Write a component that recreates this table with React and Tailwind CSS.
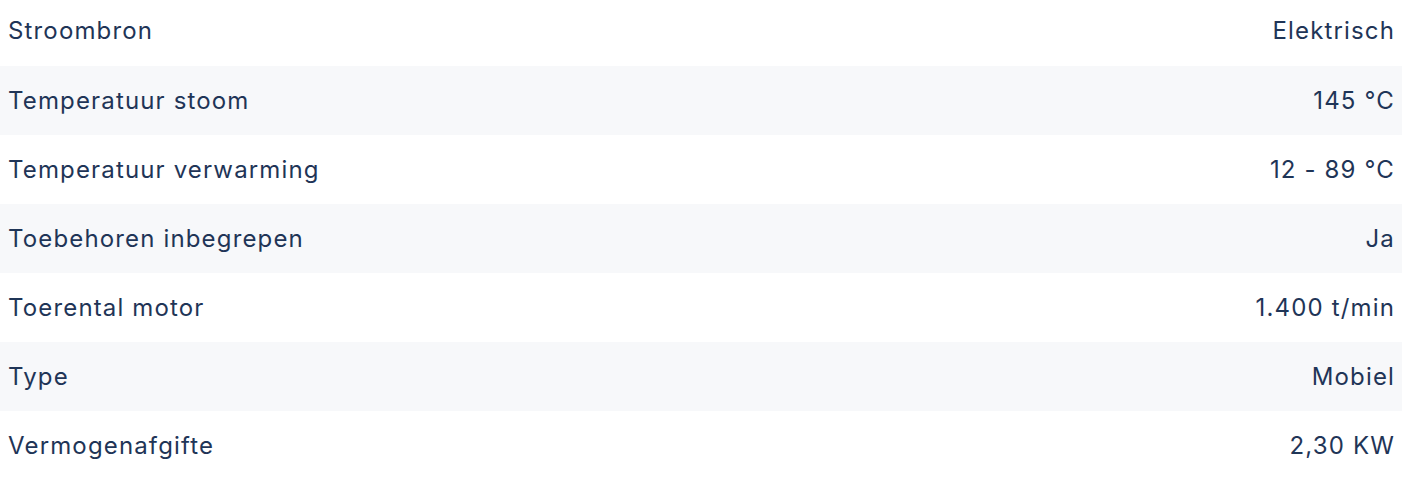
import React from "react";

const rows = [
  ["Stroombron", "Elektrisch"],
  ["Temperatuur stoom", "145 °C"],
  ["Temperatuur verwarming", "12 - 89 °C"],
  ["Toebehoren inbegrepen", "Ja"],
  ["Toerental motor", "1.400 t/min"],
  ["Type", "Mobiel"],
  ["Vermogenafgifte", "2,30 KW"],
];

export default function App() {
  return (
    <div
      className="w-[1402px] h-[480px] overflow-hidden bg-white text-[#1f3557] text-[24px] tracking-[1.15px]"
      style={{ fontFamily: "Inter, 'Open Sans', sans-serif" }}
    >
      {rows.map(([k, v], i) => (
        <div
          key={k}
          className={
            "flex items-center justify-between pl-[8px] pr-[7px] " +
            (i === 0 ? "h-[66px] pb-[5px] " : "h-[69px] ") +
            (i % 2 === 1 ? "bg-[#f7f8fa]" : "bg-white")
          }
        >
          <span>{k}</span>
          <span>{v}</span>
        </div>
      ))}
    </div>
  );
}
